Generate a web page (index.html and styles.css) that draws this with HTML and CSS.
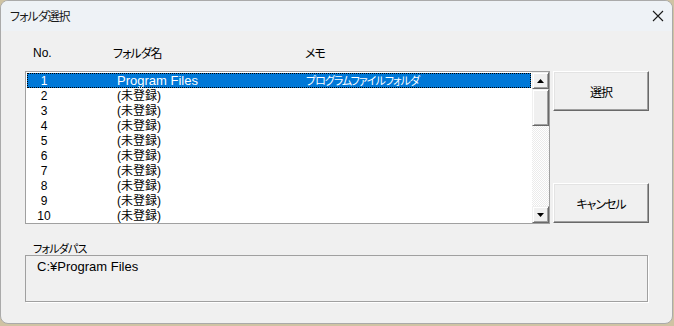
FILE: index.html
```html
<!DOCTYPE html>
<html lang="ja">
<head>
<meta charset="utf-8">
<title>フォルダ選択</title>
<link rel="stylesheet" href="styles.css">
</head>
<body>
<div class="window">
  <div class="titlebar">
    <span class="title">フォルダ選択</span>
    <svg class="close" width="12" height="12" viewBox="0 0 12 12"><path d="M1 1 L11 11 M11 1 L1 11" stroke="#1a1a1a" stroke-width="1.1" fill="none"/></svg>
  </div>
  <div class="content">
    <div class="headers">
      <span class="h-no">No.</span>
      <span class="h-name">フォルダ名</span>
      <span class="h-memo">メモ</span>
    </div>
    <div class="main">
      <div class="listbox">
        <div class="rows">
          <div class="row selected"><span class="c-no">1</span><span class="c-name latin">Program Files</span><span class="c-memo">プログラムファイルフォルダ</span></div>
          <div class="row"><span class="c-no">2</span><span class="c-name">(未登録)</span><span class="c-memo"></span></div>
          <div class="row"><span class="c-no">3</span><span class="c-name">(未登録)</span><span class="c-memo"></span></div>
          <div class="row"><span class="c-no">4</span><span class="c-name">(未登録)</span><span class="c-memo"></span></div>
          <div class="row"><span class="c-no">5</span><span class="c-name">(未登録)</span><span class="c-memo"></span></div>
          <div class="row"><span class="c-no">6</span><span class="c-name">(未登録)</span><span class="c-memo"></span></div>
          <div class="row"><span class="c-no">7</span><span class="c-name">(未登録)</span><span class="c-memo"></span></div>
          <div class="row"><span class="c-no">8</span><span class="c-name">(未登録)</span><span class="c-memo"></span></div>
          <div class="row"><span class="c-no">9</span><span class="c-name">(未登録)</span><span class="c-memo"></span></div>
          <div class="row"><span class="c-no">10</span><span class="c-name">(未登録)</span><span class="c-memo"></span></div>
        </div>
        <div class="scrollbar">
          <div class="sb-btn"><svg width="7" height="4" viewBox="0 0 7 4"><path d="M3.5 0 L7 4 L0 4 Z" fill="#000"/></svg></div>
          <div class="sb-thumb"></div>
          <div class="sb-track"></div>
          <div class="sb-btn"><svg width="7" height="4" viewBox="0 0 7 4"><path d="M0 0 L7 0 L3.5 4 Z" fill="#000"/></svg></div>
        </div>
      </div>
      <div class="buttons">
        <div class="btn">選択</div>
        <div class="btn">キャンセル</div>
      </div>
    </div>
    <div class="path-label">フォルダパス</div>
    <div class="path-box"><span class="latin">C:¥Program Files</span></div>
  </div>
</div>
</body>
</html>
```
FILE: styles.css
```css
html, body {
  margin: 0;
  padding: 0;
}
body {
  width: 674px;
  height: 326px;
  background: #cfc3a3;
  font-family: "Noto Sans CJK JP", sans-serif;
  font-size: 12px;
  color: #000;
  overflow: hidden;
}
.window {
  width: 673px;
  height: 324px;
  box-sizing: border-box;
  border: 1px solid #aaaaaa;
  border-radius: 8px;
  overflow: hidden;
  background: #f0f0f0;
  display: flex;
  flex-direction: column;
}
.titlebar {
  height: 30px;
  flex: none;
  background: #eef2f6;
  display: flex;
  align-items: center;
  justify-content: space-between;
  padding: 0 8px 0 9px;
}
.title {
  font-size: 12px;
  font-feature-settings: "palt";
  letter-spacing: -1px;
  color: #1a1a1a;
  line-height: 14px;
}
.close {
  display: block;
}
.content {
  padding: 15px 0 0 24px;
}
.headers {
  display: flex;
  height: 14px;
  line-height: 14px;
  font-size: 12px;
  font-feature-settings: "palt";
  letter-spacing: -1px;
}
.h-no {
  font-family: "Liberation Sans", "Noto Sans CJK JP", sans-serif;
  letter-spacing: 0;
  width: 80px;
  padding-left: 8px;
}
.h-name {
  width: 192px;
}
.main {
  margin-top: 11px;
  display: flex;
  gap: 3px;
}
.listbox {
  width: 525px;
  height: 153px;
  box-sizing: border-box;
  border: 1px solid #a0a0a0;
  background: #fff;
  display: flex;
}
.rows {
  flex: 1;
  padding: 1px 1px 0 1px;
}
.row {
  height: 15px;
  padding-top: 1px;
  line-height: 14px;
  display: flex;
  font-family: "Liberation Sans", "Noto Sans CJK JP", sans-serif;
  font-size: 12px;
  white-space: nowrap;
  box-sizing: border-box;
}
.row.selected {
  background: #0078d7;
  color: #fff;
  outline: 1px dotted #000;
  outline-offset: -1px;
}
.c-no {
  width: 34px;
  text-align: center;
}
.c-name {
  margin-left: 56px;
  width: 189px;
}
.c-memo {
  font-size: 11px;
  font-feature-settings: "palt";
  letter-spacing: -1px;
}
.latin {
  font-family: "Liberation Sans", "Noto Sans CJK JP", sans-serif;
  font-size: 13px;
}
.scrollbar {
  width: 17px;
  flex: none;
  display: flex;
  flex-direction: column;
}
.sb-btn {
  height: 17px;
  box-sizing: border-box;
  background: #f0f0f0;
  border-top: 1px solid #f0f0f0;
  border-left: 1px solid #f0f0f0;
  border-right: 1px solid #696969;
  border-bottom: 1px solid #696969;
  box-shadow: inset 1px 1px 0 #fff, inset -1px -1px 0 #a0a0a0;
  display: flex;
  align-items: center;
  justify-content: center;
}
.sb-btn svg {
  display: block;
}
.sb-thumb {
  height: 37px;
  box-sizing: border-box;
  background: #f0f0f0;
  border-top: 1px solid #f0f0f0;
  border-left: 1px solid #f0f0f0;
  border-right: 1px solid #696969;
  border-bottom: 1px solid #696969;
  box-shadow: inset 1px 1px 0 #fff, inset -1px -1px 0 #a0a0a0;
}
.sb-track {
  flex: 1;
  background: repeating-conic-gradient(#ffffff 0 25%, #ebebeb 0 50%) 0 0 / 2px 2px;
}
.buttons {
  width: 96px;
  height: 152px;
  display: flex;
  flex-direction: column;
  justify-content: space-between;
}
.btn {
  height: 40px;
  box-sizing: border-box;
  background: #f0f0f0;
  border-top: 1px solid #fff;
  border-left: 1px solid #fff;
  border-right: 1px solid #696969;
  border-bottom: 1px solid #696969;
  box-shadow: inset -1px -1px 0 #a0a0a0, inset 1px 1px 0 #e3e3e3;
  display: flex;
  align-items: center;
  justify-content: center;
  font-size: 12px;
  font-feature-settings: "palt";
  letter-spacing: -1px;
}
.path-label {
  margin-top: 17px;
  height: 14px;
  line-height: 14px;
  padding-left: 8px;
  font-size: 11px;
  font-feature-settings: "palt";
  letter-spacing: -0.8px;
}
.path-box {
  width: 623px;
  height: 47px;
  box-sizing: border-box;
  border: 1px solid #a0a0a0;
  box-shadow: 1px 1px 0 #fff;
  padding: 2px 0 0 11px;
  line-height: 16px;
}
.path-box .latin {
  font-size: 13px;
}
```
